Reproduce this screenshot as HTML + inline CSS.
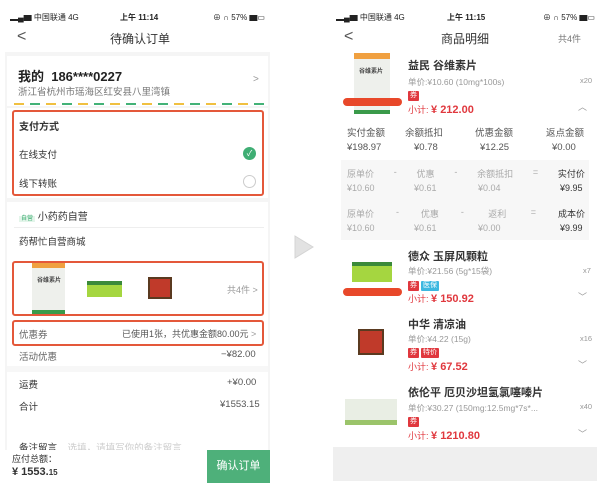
<!DOCTYPE html>
<html><head><meta charset="utf-8"><style>
*{margin:0;padding:0;box-sizing:border-box}
body{width:600px;height:485px;background:#fff;position:relative;overflow:hidden;font-family:"Liberation Sans","Noto Sans CJK SC",sans-serif;color:#333}
.a{position:absolute;white-space:nowrap}
.s{font-size:8px;color:#222}
.g{color:#999}
.r{color:#e0383e}
.box{position:absolute;border:2px solid #e4583a;border-radius:3px}
.tg{line-height:10px;font-size:7px}
.tag{display:inline-block;background:#e0383e;color:#fff;font-size:7px;padding:0 2px;border-radius:1px;line-height:10px;vertical-align:top}
</style></head><body>
<!-- LEFT PHONE -->
<div class="a" style="left:5px;top:52px;width:265px;height:400px;background:#f5f5f5"></div>
<div class="a s" style="left:10px;top:12px;font-weight:bold">▂▄▆ <span style="font-weight:normal">中国联通 4G</span></div>
<div class="a s" style="left:120px;top:12px;font-weight:bold">上午 11:14</div>
<div class="a s" style="left:213px;top:12px">⊕ ∩ 57% ▆▭</div>
<div class="a" style="left:17px;top:28px;font-size:16px;color:#555">&lt;</div>
<div class="a" style="left:110px;top:30px;font-size:12px;color:#333">待确认订单</div>
<div class="a" style="left:7px;top:56px;width:261px;height:50px;background:#fff"></div>
<div class="a" style="left:18px;top:66px;font-size:13px;font-weight:bold;color:#222">我的&nbsp; 186****0227</div>
<div class="a" style="left:18px;top:84px;font-size:9.5px;color:#777">浙江省杭州市瑶海区红安县八里湾镇</div>
<div class="a g" style="left:253px;top:74px;font-size:10px">&gt;</div>
<div class="a" style="left:14px;top:103px;width:250px;height:2px;background:repeating-linear-gradient(90deg,#f0c040 0 10px,transparent 10px 16px,#43b277 16px 26px,transparent 26px 32px)"></div>
<div class="a" style="left:7px;top:108px;width:261px;height:342px;background:#fff"></div>
<div class="box" style="left:12px;top:110px;width:252px;height:86px"></div>
<div class="a" style="left:19px;top:118px;font-size:10px;font-weight:bold">支付方式</div>
<div class="a" style="left:19px;top:147px;font-size:9.5px">在线支付</div>
<div class="a" style="left:243px;top:147px;width:13px;height:13px;border-radius:50%;background:#3fae74;color:#fff;font-size:8px;text-align:center;line-height:13px">✓</div>
<div class="a" style="left:19px;top:176px;font-size:9.5px">线下转账</div>
<div class="a" style="left:243px;top:175px;width:13px;height:13px;border-radius:50%;border:1px solid #ccc"></div>
<div class="a" style="left:7px;top:198px;width:261px;height:4px;background:#f5f5f5"></div>
<div class="a" style="left:19px;top:208px;font-size:10px"><span style="font-size:6px;color:#3fae74;background:#e3f5ea;padding:0 2px">自营</span> 小药药自营</div>
<div class="a" style="left:14px;top:227px;width:250px;height:1px;background:#eee"></div>
<div class="a" style="left:19px;top:234px;font-size:9.5px">药帮忙自营商城</div>
<div class="box" style="left:12px;top:261px;width:252px;height:55px"></div>
<div class="a" style="left:32px;top:263px;width:33px;height:51px;background:#eef0ec;border-top:5px solid #f0a040;border-bottom:4px solid #3a9a4a"></div>
<div class="a" style="left:37px;top:275px;font-size:6px;font-weight:bold;color:#444">谷维素片</div>
<div class="a" style="left:87px;top:281px;width:35px;height:16px;background:#a5d640;border-top:4px solid #3b8a3a"></div>
<div class="a" style="left:148px;top:277px;width:24px;height:22px;background:#c03a2a;border:2px solid #5a3a20"></div>
<div class="a g" style="left:227px;top:283px;font-size:9px">共4件 &gt;</div>
<div class="box" style="left:12px;top:320px;width:252px;height:26px"></div>
<div class="a" style="left:19px;top:327px;font-size:9.5px;color:#666">优惠券</div>
<div class="a" style="left:122px;top:327px;font-size:9px;color:#555">已使用1张，共优惠金额80.00元 <span class="g">&gt;</span></div>
<div class="a" style="left:19px;top:349px;font-size:9.5px;color:#666">活动优惠</div>
<div class="a" style="left:221px;top:349px;font-size:9.5px;color:#555">−¥82.00</div>
<div class="a" style="left:7px;top:366px;width:261px;height:6px;background:#f7f7f7"></div>
<div class="a" style="left:19px;top:377px;font-size:9.5px">运费</div>
<div class="a" style="left:227px;top:377px;font-size:9.5px;color:#555">+¥0.00</div>
<div class="a" style="left:19px;top:399px;font-size:9.5px">合计</div>
<div class="a" style="left:220px;top:399px;font-size:9.5px;color:#555">¥1553.15</div>
<div class="a" style="left:19px;top:440px;font-size:9.5px">备注留言 <span style="color:#ccc;margin-left:8px">选填，请填写你的备注留言</span></div>
<div class="a" style="left:5px;top:450px;width:202px;height:35px;background:#fff"></div>
<div class="a" style="left:12px;top:452px;font-size:9px">应付总额：</div>
<div class="a" style="left:12px;top:466px;font-size:11px;font-weight:bold">¥ 1553.<span style="font-size:8px">15</span></div>
<div class="a" style="left:207px;top:450px;width:63px;height:33px;background:#4eb07a;color:#fff;font-size:11px;text-align:center;line-height:33px">确认订单</div>
<!-- ARROW -->
<svg class="a" style="left:292px;top:234px" width="24" height="26"><path d="M3 2 L21 13 L3 24 Z" fill="#e2e2e2" stroke="#d4d4d4"/></svg>
<!-- RIGHT PHONE -->
<div class="a s" style="left:336px;top:12px;font-weight:bold">▂▄▆ <span style="font-weight:normal">中国联通 4G</span></div>
<div class="a s" style="left:447px;top:12px;font-weight:bold">上午 11:15</div>
<div class="a s" style="left:543px;top:12px">⊕ ∩ 57% ▆▭</div>
<div class="a" style="left:344px;top:28px;font-size:16px;color:#555">&lt;</div>
<div class="a" style="left:441px;top:30px;font-size:12px">商品明细</div>
<div class="a" style="left:558px;top:32px;font-size:9px;color:#777">共4件</div>
<div class="a" style="left:354px;top:53px;width:36px;height:61px;background:#eef0ec;border-top:6px solid #f0a040;border-bottom:4px solid #3a9a4a"></div>
<div class="a" style="left:359px;top:66px;font-size:6px;font-weight:bold;color:#444">谷维素片</div>
<div class="a" style="left:343px;top:98px;width:59px;height:8px;background:#e8482a;border-radius:4px"></div>
<div class="a" style="left:408px;top:57px;font-size:11px;font-weight:bold">益民 谷维素片</div>
<div class="a g" style="left:408px;top:76px;font-size:8.5px">单价:¥10.60 (10mg*100s)</div>
<div class="a g" style="left:580px;top:76px;font-size:7.5px">x20</div>
<div class="a tg" style="left:408px;top:91px"><span class="tag">券</span></div>
<div class="a r" style="left:408px;top:103px;font-size:9px">小计: <b style="font-size:11px">¥ 212.00</b></div>
<div class="a g" style="left:578px;top:100px;font-size:9px">︿</div>
<div class="a" style="left:347px;top:125px;font-size:9.5px;color:#555">实付金额</div>
<div class="a" style="left:405px;top:125px;font-size:9.5px;color:#555">余额抵扣</div>
<div class="a" style="left:475px;top:125px;font-size:9.5px;color:#555">优惠金额</div>
<div class="a" style="left:546px;top:125px;font-size:9.5px;color:#555">返点金额</div>
<div class="a" style="left:347px;top:142px;font-size:9.5px;color:#555">¥198.97</div>
<div class="a" style="left:414px;top:142px;font-size:9.5px;color:#555">¥0.78</div>
<div class="a" style="left:480px;top:142px;font-size:9.5px;color:#555">¥12.25</div>
<div class="a" style="left:552px;top:142px;font-size:9.5px;color:#555">¥0.00</div>
<div class="a" style="left:341px;top:160px;width:248px;height:80px;background:#f7f7f7"></div>
<div class="a" style="left:347px;top:167px;font-size:9px;color:#aaa;width:238px;display:flex;justify-content:space-between"><span>原单价</span><span>-</span><span>优惠</span><span>-</span><span>余额抵扣</span><span>=</span><span style="color:#333">实付价</span></div>
<div class="a" style="left:347px;top:183px;font-size:9px;color:#aaa">¥10.60</div><div class="a" style="left:414px;top:183px;font-size:9px;color:#aaa">¥0.61</div><div class="a" style="left:478px;top:183px;font-size:9px;color:#aaa">¥0.04</div><div class="a" style="left:560px;top:183px;font-size:9px;color:#333">¥9.95</div>
<div class="a" style="left:347px;top:207px;font-size:9px;color:#aaa;width:238px;display:flex;justify-content:space-between"><span>原单价</span><span>-</span><span>优惠</span><span>-</span><span>&nbsp;返利&nbsp;</span><span>=</span><span style="color:#333">成本价</span></div>
<div class="a" style="left:347px;top:223px;font-size:9px;color:#aaa">¥10.60</div><div class="a" style="left:414px;top:223px;font-size:9px;color:#aaa">¥0.61</div><div class="a" style="left:478px;top:223px;font-size:9px;color:#aaa">¥0.00</div><div class="a" style="left:560px;top:223px;font-size:9px;color:#333">¥9.99</div>
<!-- p2 -->
<div class="a" style="left:352px;top:262px;width:40px;height:20px;background:#a5d640;border-top:4px solid #3b8a3a"></div>
<div class="a" style="left:343px;top:288px;width:59px;height:8px;background:#e8482a;border-radius:4px"></div>
<div class="a" style="left:408px;top:248px;font-size:11px;font-weight:bold">德众 玉屏风颗粒</div>
<div class="a g" style="left:408px;top:265px;font-size:8.5px">单价:¥21.56 (5g*15袋)</div>
<div class="a g" style="left:583px;top:266px;font-size:7.5px">x7</div>
<div class="a tg" style="left:408px;top:281px"><span class="tag">券</span> <span class="tag" style="background:#3cb8e0">医保</span></div>
<div class="a r" style="left:408px;top:292px;font-size:9px">小计: <b style="font-size:11px">¥ 150.92</b></div>
<div class="a g" style="left:578px;top:290px;font-size:9px">﹀</div>
<!-- p3 -->
<div class="a" style="left:358px;top:329px;width:26px;height:26px;background:#c03a2a;border:2px solid #5a3a20"></div>
<div class="a" style="left:408px;top:316px;font-size:11px;font-weight:bold">中华 清凉油</div>
<div class="a g" style="left:408px;top:333px;font-size:8.5px">单价:¥4.22 (15g)</div>
<div class="a g" style="left:580px;top:334px;font-size:7.5px">x16</div>
<div class="a tg" style="left:408px;top:348px"><span class="tag">券</span> <span class="tag">特价</span></div>
<div class="a r" style="left:408px;top:360px;font-size:9px">小计: <b style="font-size:11px">¥ 67.52</b></div>
<div class="a g" style="left:578px;top:358px;font-size:9px">﹀</div>
<!-- p4 -->
<div class="a" style="left:345px;top:399px;width:52px;height:26px;background:#e9eee4;border-bottom:5px solid #9bc46a"></div>
<div class="a" style="left:408px;top:384px;font-size:11px;font-weight:bold">依伦平 厄贝沙坦氢氯噻嗪片</div>
<div class="a g" style="left:408px;top:402px;font-size:8.5px">单价:¥30.27 (150mg:12.5mg*7s*...</div>
<div class="a g" style="left:580px;top:402px;font-size:7.5px">x40</div>
<div class="a tg" style="left:408px;top:417px"><span class="tag">券</span></div>
<div class="a r" style="left:408px;top:429px;font-size:9px">小计: <b style="font-size:11px">¥ 1210.80</b></div>
<div class="a g" style="left:578px;top:427px;font-size:9px">﹀</div>
<div class="a" style="left:333px;top:447px;width:264px;height:34px;background:#efefef"></div>
</body></html>
